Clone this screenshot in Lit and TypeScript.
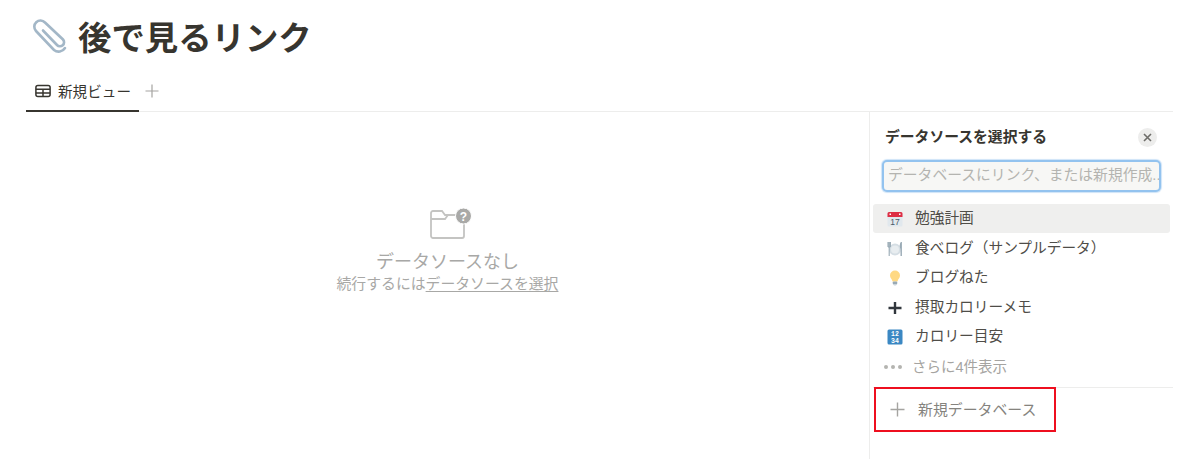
import {LitElement, html, css} from 'lit';
import {customElement} from 'lit/decorators.js';

const calendar = html`<svg width="16" height="16" viewBox="0 0 16 16"><rect x="0.5" y="1" width="15" height="14.5" rx="1.5" fill="#e1e8ed"/><path d="M0.5 6V2.5A1.5 1.5 0 0 1 2 1h12a1.5 1.5 0 0 1 1.500 1.500V6z" fill="#dd2e44"/><rect x="2.500" y="2.500" width="1.500" height="1.500" fill="#fff"/><rect x="12" y="2.500" width="1.500" height="1.500" fill="#fff"/><text x="8" y="13.500" text-anchor="middle" font-size="8.500" font-family="Liberation Sans" fill="#4a5a68">17</text></svg>`;
const fork = html`<svg width="16" height="16" viewBox="0 0 16 16"><circle cx="8" cy="8.500" r="6" fill="#d5dee4"/><circle cx="8" cy="8.500" r="4" fill="#e8edf0"/><path d="M1 1v5M2.200 1v14M3.400 1v5M1 6h2.400" stroke="#99aab5" stroke-width="1.100" fill="none"/><path d="M14 1c-1.500 1-1.500 5-.5 7v7h1.400V1z" fill="#99aab5"/></svg>`;
const bulb = html`<svg width="16" height="16" viewBox="0 0 16 16"><path d="M8 0.500a5 5 0 0 0-5 5c0 2.500 2 3.500 2.500 6h5c.5-2.500 2.500-3.500 2.500-6a5 5 0 0 0-5-5z" fill="#ffd983"/><rect x="5.800" y="11.500" width="4.400" height="3" rx=".8" fill="#99aab5"/><rect x="6.800" y="14.500" width="2.400" height="1" fill="#ccd6dd"/></svg>`;
const plusDark = html`<svg width="16" height="16" viewBox="0 0 16 16"><path d="M1.500 8h13M8 2v12" stroke="#31373d" stroke-width="2.400"/></svg>`;
const numbers = html`<svg width="16" height="16" viewBox="0 0 16 16"><rect x="0.500" y="0.500" width="15" height="15" rx="1.500" fill="#3b88c3"/><text x="8" y="7" text-anchor="middle" font-size="6.500" font-weight="700" font-family="Liberation Mono" fill="#fff">12</text><text x="8" y="13.500" text-anchor="middle" font-size="6.500" font-weight="700" font-family="Liberation Mono" fill="#fff">34</text></svg>`;

@customElement('app-root')
class AppRoot extends LitElement {
    static styles = css`
:host {
display: block;
width: 1200px;
height: 459px;
overflow: hidden;
background: #fff;
color: #37352f;
font-family: "Liberation Sans", "Noto Sans CJK JP", sans-serif;
}
.page {
height: 459px;
display: flex;
flex-direction: column;
padding: 0 27px 0 26px;
box-sizing: border-box;
}
.title {
display: flex;
align-items: center;
height: 74px;
padding-top: 3px;
box-sizing: border-box;
gap: 10px;
padding-left: 4px;
font-size: 33.400px;
font-weight: 700;
line-height: 40px;
}
.title svg { display: block; margin-top: -3px; }
.tabs {
display: flex;
height: 38px;
box-sizing: border-box;
border-bottom: 1px solid #ededec;
}
.tab {
display: flex;
align-items: center;
gap: 7px;
width: 113px;
box-sizing: border-box;
margin-bottom: -1px;
padding: 0 0 3px 9px;
border-bottom: 2px solid #37352f;
font-size: 14.600px;
}
.add {
display: flex;
align-items: center;
padding: 0 0 4px 6px;
}
.main {
flex: 1;
display: flex;
min-height: 0;
}
.empty {
flex: none;
width: 843px;
display: flex;
flex-direction: column;
align-items: center;
padding-top: 96px;
color: #a8a8a6;
}
.empty svg { margin-left: 7px; }
.empty-title {
margin-top: 9px;
font-size: 18px;
line-height: 26px;
}
.empty-sub {
font-size: 14.850px;
line-height: 18px;
}
.empty-sub u { text-underline-offset: 2px; }
.panel {
flex: 1;
min-width: 0;
border-left: 1px solid #ededec;
padding: 0 3px;
}
.panel-head {
display: flex;
align-items: center;
justify-content: space-between;
height: 48px;
box-sizing: border-box;
padding: 3px 13px 0 12px;
font-size: 14.800px;
font-weight: 700;
line-height: 20px;
}
.panel-head span { margin-top: -2px; }
.close {
width: 19px;
height: 19px;
border-radius: 50%;
background: #ededec;
display: flex;
align-items: center;
justify-content: center;
}
.search {
margin: 0 9px 0 8.500px;
height: 32px;
box-sizing: border-box;
border: 2px solid #93c3ef;
border-radius: 5px;
box-shadow: 0 0 1px 1px #cfe4f8;
background: #f7f7f5;
padding: 0 0 0 4.500px;
color: #b4b4b0;
font-size: 14.800px;
line-height: 26px;
white-space: nowrap;
overflow: hidden;
}
.list {
margin-top: 12px;
}
.row {
display: flex;
align-items: center;
height: 29.500px;
padding-left: 14px;
gap: 12px;
font-size: 14.700px;
line-height: 20px;
color: #4f4d48;
border-radius: 3px;
}
.row span { margin-top: -2px; }
.row.on { background: #efefee; height: 29px; margin-bottom: 1px; }
.more {
display: flex;
align-items: center;
height: 29px;
padding-left: 11px;
gap: 10px;
font-size: 14.500px;
color: #a5a4a1;
}
.more span { margin-top: -2px; }
.foot {
margin: 6px -3px 0 0;
border-top: 1px solid #ededec;
}
.new {
display: flex;
align-items: center;
gap: 13px;
width: 182px;
height: 45px;
box-sizing: border-box;
margin: -1px 0 0 1px;
padding-left: 14px;
border: 2px solid #ee0f1f;
font-size: 14.900px;
color: #85837e;
}
.new span { margin-top: -2px; }
`;

    row(icon: unknown, name: string, on = false) {
	return html`<div class="row ${on ? 'on' : ''}">${icon}<span>${name}</span></div>`;
    }

    render() {
	return html`<div class="page">
<div class="title">
<svg width="38" height="38" viewBox="0 0 38 38" fill="none" stroke="#a3b7c7" stroke-width="2.600" stroke-linecap="round"><path d="M13 12.500 L27 27 a4 4 0 0 0 6 -5.500 L15 4.500 a6 6 0 0 0 -9 8.500 L24 32 a7.500 7.500 0 0 0 11 -2"/></svg>
<span>後で見るリンク</span>
</div>
<div class="tabs">
<div class="tab">
<svg width="16" height="16" viewBox="0 0 16 16" fill="none" stroke="#37352f" stroke-width="1.500"><rect x="0.900" y="2.400" width="14.200" height="11.200" rx="2"/><path d="M0.900 6.300h14.200M0.900 10h14.200M8 6.300v7.300"/></svg>
<span>新規ビュー</span>
</div>
<div class="add"><svg width="14" height="14" viewBox="0 0 14 14"><path d="M0.500 7h13M7 0.500v13" stroke="#a5a4a1" stroke-width="1.200"/></svg></div>
</div>
<div class="main">
<div class="empty">
<svg width="42" height="32" viewBox="0 0 42 32" fill="none"><path d="M1 5a2 2 0 0 1 2-2h9l3 4h17a2 2 0 0 1 2 2v19a2 2 0 0 1-2 2H3a2 2 0 0 1-2-2z M1 11h14l3-4" stroke="#c4c4c2" stroke-width="1.800"/><circle cx="33.500" cy="8" r="8" fill="#a9a9a7" stroke="#fff" stroke-width="1"/><text x="33.500" y="12.500" text-anchor="middle" font-size="12" font-weight="700" font-family="Liberation Sans" fill="#fff">?</text></svg>
<div class="empty-title">データソースなし</div>
<div class="empty-sub">続行するには<u>データソースを選択</u></div>
</div>
<div class="panel">
<div class="panel-head"><span>データソースを選択する</span><div class="close"><svg width="9" height="9" viewBox="0 0 9 9"><path d="M1 1l7 7M8 1l-7 7" stroke="#6e6d69" stroke-width="1.600"/></svg></div></div>
<div class="search">データベースにリンク、または新規作成...</div>
<div class="list">
${this.row(calendar, '勉強計画', true)}
${this.row(fork, '食べログ（サンプルデータ）')}
${this.row(bulb, 'ブログねた')}
${this.row(plusDark, '摂取カロリーメモ')}
${this.row(numbers, 'カロリー目安')}
<div class="more"><svg width="18" height="4" viewBox="0 0 18 4" fill="#b4b4b0"><circle cx="2" cy="2" r="2"/><circle cx="9" cy="2" r="2"/><circle cx="16" cy="2" r="2"/></svg><span>さらに4件表示</span></div>
</div>
<div class="foot">
<div class="new"><svg width="15" height="15" viewBox="0 0 15 15"><path d="M0.500 7.500h14M7.500 0.500v14" stroke="#a5a4a1" stroke-width="1.400"/></svg><span>新規データベース</span></div>
</div>
</div>
</div>
</div>`;
    }
}
